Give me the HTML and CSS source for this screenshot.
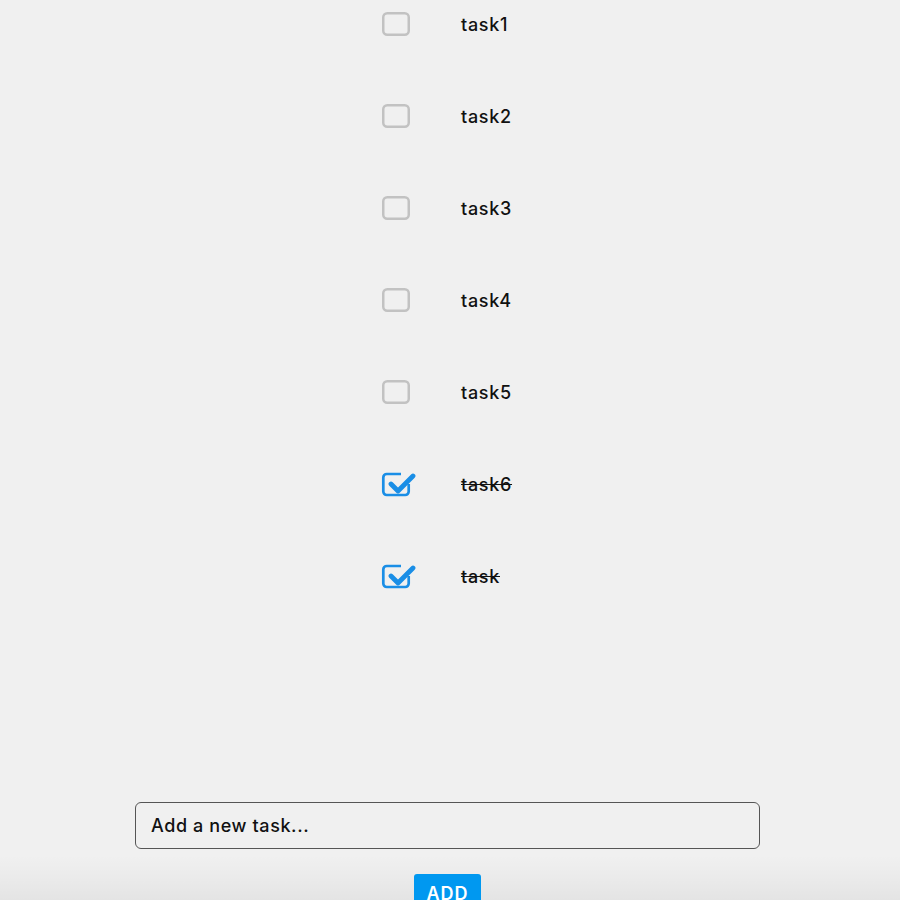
FILE: index.html
```html
<!DOCTYPE html>
<html>
<head>
<meta charset="utf-8">
<link rel="stylesheet" href="styles.css">
</head>
<body>
<div class="page">
  <ul class="tasks">
    <li class="task">
      <svg class="box" viewBox="0 0 36 28" width="36" height="28"><rect x="3.25" y="3.25" width="25.5" height="21.5" rx="4" class="empty"/></svg>
      <span class="label">task1</span>
    </li>
    <li class="task">
      <svg class="box" viewBox="0 0 36 28" width="36" height="28"><rect x="3.25" y="3.25" width="25.5" height="21.5" rx="4" class="empty"/></svg>
      <span class="label">task2</span>
    </li>
    <li class="task">
      <svg class="box" viewBox="0 0 36 28" width="36" height="28"><rect x="3.25" y="3.25" width="25.5" height="21.5" rx="4" class="empty"/></svg>
      <span class="label">task3</span>
    </li>
    <li class="task">
      <svg class="box" viewBox="0 0 36 28" width="36" height="28"><rect x="3.25" y="3.25" width="25.5" height="21.5" rx="4" class="empty"/></svg>
      <span class="label">task4</span>
    </li>
    <li class="task">
      <svg class="box" viewBox="0 0 36 28" width="36" height="28"><rect x="3.25" y="3.25" width="25.5" height="21.5" rx="4" class="empty"/></svg>
      <span class="label">task5</span>
    </li>
    <li class="task done">
      <svg class="box" viewBox="0 0 36 28" width="36" height="28"><path class="frame" d="M28.7 14 V21.5 a3.5 3.5 0 0 1 -3.5 3.5 H6.8 a3.5 3.5 0 0 1 -3.5 -3.5 V7.5 a3.5 3.5 0 0 1 3.5 -3.5 H21"/><polyline class="tick" points="11,14 18,21 33,6"/></svg>
      <span class="label">task6</span>
    </li>
    <li class="task done">
      <svg class="box" viewBox="0 0 36 28" width="36" height="28"><path class="frame" d="M28.7 14 V21.5 a3.5 3.5 0 0 1 -3.5 3.5 H6.8 a3.5 3.5 0 0 1 -3.5 -3.5 V7.5 a3.5 3.5 0 0 1 3.5 -3.5 H21"/><polyline class="tick" points="11,14 18,21 33,6"/></svg>
      <span class="label">task</span>
    </li>
  </ul>
  <form class="add-form">
    <input class="new-task" type="text" placeholder="Add a new task...">
    <button class="add-btn" type="button">ADD</button>
  </form>
</div>
</body>
</html>
```
FILE: styles.css
```css
html, body {
  margin: 0;
  padding: 0;
  height: 100%;
}
body {
  background: #f0f0f0;
  font-family: Inter, "Liberation Sans", Arial, sans-serif;
  color: #111;
  overflow: hidden;
}
.page {
  height: 900px;
  padding-right: 5px;
  box-sizing: border-box;
  display: flex;
  flex-direction: column;
  align-items: center;
  background: linear-gradient(to bottom, rgba(0,0,0,0) 855px, rgba(0,0,0,0.02) 875px, rgba(0,0,0,0.05) 900px);
}
.tasks {
  list-style: none;
  margin: 0;
  padding: 0;
  width: 131px;
  display: flex;
  flex-direction: column;
  gap: 44px;
}
.task {
  height: 48px;
  display: flex;
  align-items: center;
  gap: 45px;
  margin-left: -2px;
}
.box {
  flex: none;
  display: block;
}
.empty {
  fill: none;
  stroke: #c2c2c2;
  stroke-width: 2.5;
}
.frame {
  fill: none;
  stroke: #1a8ee6;
  stroke-width: 2.7;
}
.tick {
  fill: none;
  stroke: #1a8ee6;
  stroke-width: 4.8;
  stroke-linecap: round;
  stroke-linejoin: round;
}
.label {
  font-size: 18px;
  font-weight: 500;
  line-height: 24px;
  letter-spacing: 0.7px;
  padding-top: 2px;
  white-space: nowrap;
}
.done .label {
  text-decoration: line-through;
}
.add-form {
  margin-top: 202px;
  display: flex;
  flex-direction: column;
  align-items: center;
}
.new-task {
  width: 625px;
  height: 47px;
  box-sizing: border-box;
  border: 1px solid #555;
  border-radius: 6px;
  background: #f0f0f0;
  padding: 0 15px;
  font-family: inherit;
  font-size: 18px;
  font-weight: 500;
  letter-spacing: 0.6px;
  outline: none;
}
.new-task::placeholder {
  color: #111;
  opacity: 1;
}
.add-btn {
  margin-top: 25px;
  width: 67px;
  height: 40px;
  border: none;
  border-radius: 3px;
  background: #0098f0;
  color: #fff;
  font-family: inherit;
  font-size: 18px;
  font-weight: 600;
  letter-spacing: 1px;
  padding: 0;
  line-height: 40px;
}
```
